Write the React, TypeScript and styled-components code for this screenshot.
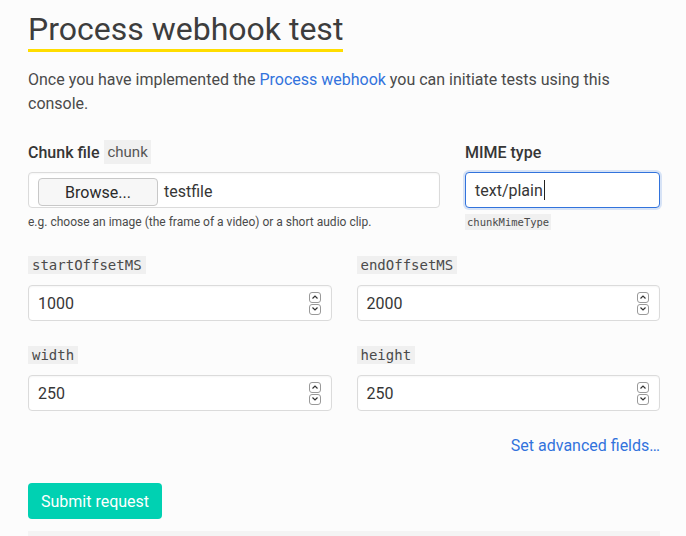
import React from 'react';
import styled, { createGlobalStyle } from 'styled-components';

const GlobalStyle = createGlobalStyle`
  html, body {
    margin: 0;
    padding: 0;
    background: #fcfcfc;
    font-family: Roboto, "Liberation Sans", sans-serif;
    color: #4a4a4a;
  }
  * { box-sizing: border-box; }
`;

const Page = styled.main`
  width: 632px;
  margin-left: 28px;
  padding-top: 9px;
`;

const Title = styled.h1`
  display: inline-block;
  margin: 0;
  font-size: 32px;
  font-weight: 400;
  line-height: 40px;
  color: #3d3d3d;
  padding-bottom: 0;
  border-bottom: 3px solid #ffdd00;
`;

const Intro = styled.p`
  margin: 16px 0 24px;
  font-size: 16px;
  line-height: 24px;
`;

const Link = styled.a`
  color: #3273dc;
  text-decoration: none;
`;

const Row = styled.div<{ $cols: string; $mb: number }>`
  display: grid;
  grid-template-columns: ${p => p.$cols};
  column-gap: 25px;
  margin-bottom: ${p => p.$mb}px;
`;

const Field = styled.div`
  display: flex;
  flex-direction: column;
`;

const Label = styled.label`
  display: flex;
  align-items: center;
  gap: 5px;
  height: 24px;
  margin-bottom: 8px;
  font-size: 16px;
  font-weight: 500;
  color: #363636;
`;

const SansTag = styled.span`
  background: #f0f0f0;
  font-weight: 400;
  font-size: 15px;
  padding: 0 3px;
  line-height: 24px;
  color: #555;
`;

const Code = styled.code<{ $small?: boolean }>`
  background: #f0f0f0;
  font-family: "DejaVu Sans Mono", "Liberation Mono", monospace;
  font-size: ${p => (p.$small ? '10.5px' : '14px')};
  line-height: ${p => (p.$small ? '16px' : '18px')};
  padding: 0 ${p => (p.$small ? '2px' : '4px')};
  color: #4a4a4a;
  font-weight: 400;
`;

const Box = styled.div<{ $focus?: boolean }>`
  display: flex;
  align-items: center;
  height: 36px;
  background: #fff;
  border: 1px solid ${p => (p.$focus ? '#3273dc' : '#dbdbdb')};
  border-radius: 4px;
  box-shadow: ${p => (p.$focus ? '0 0 0 2px rgba(50,115,220,0.18)' : 'inset 0 1px 2px rgba(10,10,10,0.04)')};
  font-size: 16px;
  color: #363636;
  padding: 0 9px;
`;

const FileBox = styled(Box)`
  align-items: flex-start;
`;

const BrowseButton = styled.span`
  display: flex;
  align-items: center;
  justify-content: center;
  width: 120px;
  height: 28px;
  margin-top: 5px;
  border: 1px solid #c8c8c8;
  border-radius: 4px;
  background: #f7f7f7;
  color: #2a2a2a;
  margin-right: 6px;
`;

const FileName = styled.span`
  line-height: 36px;
  margin-top: 1px;
`;

const Caret = styled.span`
  display: inline-block;
  width: 1px;
  height: 20px;
  background: #222;
  margin-left: 1px;
`;

const Value = styled.span`
  flex: 1;
`;

const Help = styled.div`
  display: flex;
  align-items: flex-start;
  margin-top: 6px;
  font-size: 12px;
  line-height: 16px;
  color: #4a4a4a;
`;

const SpinBox = styled.span`
  display: flex;
  flex-direction: column;
  gap: 1px;
  margin-right: 1px;
`;

const SpinPart = styled.span`
  display: flex;
  align-items: center;
  justify-content: center;
  width: 12px;
  height: 11px;
  border: 1px solid #9a9a9a;
  border-radius: 3px;
  background: #fff;
`;

const Advanced = styled.div`
  display: flex;
  justify-content: flex-end;
  margin-bottom: 25px;
  font-size: 16px;
  line-height: 24px;
`;

const Submit = styled.button`
  display: block;
  width: 134px;
  height: 36px;
  border: none;
  border-radius: 4px;
  background: #00d1b2;
  color: #fff;
  font-family: Roboto, "Liberation Sans", sans-serif;
  font-size: 16px;
  padding: 0;
  margin-bottom: 12px;
`;

const Output = styled.div`
  height: 5px;
  background: #f4f4f4;
`;

const Spinner: React.FC = () => (
  <SpinBox>
    <SpinPart>
      <svg width="8" height="6" viewBox="0 0 8 6">
        <path d="M1.5 4.5 L4 2 L6.5 4.5" fill="none" stroke="#333" strokeWidth="1.2" />
      </svg>
    </SpinPart>
    <SpinPart>
      <svg width="8" height="6" viewBox="0 0 8 6">
        <path d="M1.5 1.5 L4 4 L6.5 1.5" fill="none" stroke="#333" strokeWidth="1.2" />
      </svg>
    </SpinPart>
  </SpinBox>
);

const NumberField: React.FC<{ name: string; value: string }> = ({ name, value }) => (
  <Field>
    <Label>
      <Code>{name}</Code>
    </Label>
    <Box>
      <Value>{value}</Value>
      <Spinner />
    </Box>
  </Field>
);

const App: React.FC = () => (
  <>
    <GlobalStyle />
    <Page>
      <Title>Process webhook test</Title>
      <Intro>
        Once you have implemented the <Link href="#">Process webhook</Link> you can initiate tests using this
        console.
      </Intro>
      <Row $cols="412px 1fr" $mb={23}>
        <Field>
          <Label>
            Chunk file <SansTag>chunk</SansTag>
          </Label>
          <FileBox>
            <BrowseButton>Browse...</BrowseButton>
            <FileName>testfile</FileName>
          </FileBox>
          <Help>e.g. choose an image (the frame of a video) or a short audio clip.</Help>
        </Field>
        <Field>
          <Label>MIME type</Label>
          <Box $focus>
            text/plain
            <Caret />
          </Box>
          <Help>
            <Code $small>chunkMimeType</Code>
          </Help>
        </Field>
      </Row>
      <Row $cols="1fr 1fr" $mb={22}>
        <NumberField name="startOffsetMS" value="1000" />
        <NumberField name="endOffsetMS" value="2000" />
      </Row>
      <Row $cols="1fr 1fr" $mb={23}>
        <NumberField name="width" value="250" />
        <NumberField name="height" value="250" />
      </Row>
      <Advanced>
        <Link href="#">Set advanced fields…</Link>
      </Advanced>
      <Submit>Submit request</Submit>
      <Output />
    </Page>
  </>
);

export default App;
